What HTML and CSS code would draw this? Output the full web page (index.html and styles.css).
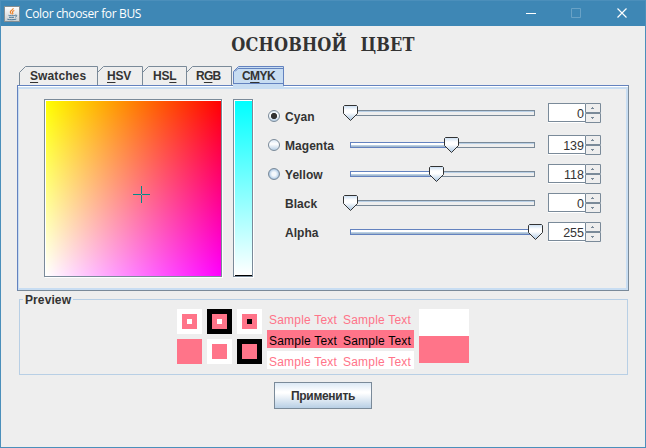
FILE: index.html
```html
<!DOCTYPE html>
<html lang="ru">
<head>
<meta charset="utf-8">
<title>Color chooser for BUS</title>
<link rel="stylesheet" href="styles.css">
</head>
<body>
<svg class="defs" width="0" height="0">
  <defs>
    <linearGradient id="knob" x1="0" y1="0" x2="0" y2="1">
      <stop offset="0" stop-color="#c8ddf2"/><stop offset=".3" stop-color="#ffffff"/><stop offset=".48" stop-color="#ffffff"/><stop offset="1" stop-color="#a9c6e2"/>
    </linearGradient>
    <symbol id="thumb" viewBox="0 0 15 16">
      <path d="M1.5.5h12l1 1v7l-7 7-7-7v-7z" fill="url(#knob)" stroke="#333"/>
    </symbol>
    <symbol id="arrows" viewBox="0 0 16 20">
      <path d="M.5.5h15v9H.5zM.5 10.5h15v9H.5z" fill="#eee" stroke="#7a8a99"/>
      <path d="M7 4h1v1h1v1H6V5h1zM6 14h3v1H8v1H7v-1H6z" fill="#7a8a99"/>
    </symbol>
  </defs>
</svg>
<div class="window">
  <header class="titlebar">
    <svg class="app-icon" width="16" height="16" viewBox="0 0 16 16">
      <defs><linearGradient id="tile" x1="0" y1="0" x2="0" y2="1"><stop stop-color="#fff"/><stop offset="1" stop-color="#c9ced0"/></linearGradient></defs>
      <rect x=".5" y=".5" width="15" height="15" fill="url(#tile)" stroke="#858e92"/>
      <path d="M9.2 2.2C9.5 4 5.8 4.5 6.3 6.2c.2.8 1 1.3 1 2.1M10.3 4.6C8 5.5 8.2 6.4 8.8 7.1c.3.5 0 .9-.4 1.3" fill="none" stroke="#ed7d20" stroke-width="1.1"/>
      <path d="M4.5 9.3c1 .6 4.7.6 6.3.1M5 11.2c1.4.5 3.7.5 5 0M3.3 13.2c2.8.7 6.2.7 9-.1M11 9.2c2.7-.6 2 1.5.2 2" fill="none" stroke="#4d7896"/>
    </svg>
    <span class="window-title">Color chooser for BUS</span>
    <svg class="controls" width="102" height="11" viewBox="0 0 102 11">
      <path d="M1 5.500h10" stroke="#fff"/>
      <path d="M46.500.5h9v9h-9z" fill="none" stroke="#69a2c6"/>
      <path d="M92.500.5l9 9M101.500.5l-9 9" stroke="#fff" stroke-width="1.15"/>
    </svg>
  </header>
  <h1><span>ОСНОВНОЙ ЦВЕТ</span></h1>
  <nav class="tabs">
    <div class="tab swatches"><svg width="79" height="19"><path d="M.5 19V6.500L6.500.5h72V19" /></svg><span><u>S</u>watches</span></div>
    <div class="tab hsv"><svg width="46" height="19"><path d="M.5 6.500L6.500.5h39V19"/></svg><span><u>H</u>SV</span></div>
    <div class="tab hsl"><svg width="45" height="19"><path d="M.5 6.500L6.500.5h38V19"/></svg><span>HS<u>L</u></span></div>
    <div class="tab rgb"><svg width="46" height="19"><path d="M.5 6.500L6.500.5h39V19"/></svg><span>R<u>G</u>B</span></div>
    <div class="tab cmyk"><svg width="53" height="21"><path class="fill" d="M1 21V6L6 1h46v20z"/><path class="selected-line" d="M1.500 18V5.500L6.500.5h45V20M3 5.500L6 2.500h45M1 17.500h51"/></svg><span>C<u>M</u>YK</span></div>
  </nav>
  <main class="panel">
    <div class="etched field-frame"><div class="field">
      <svg width="17" height="17" viewBox="0 0 17 17"><path d="M0 8.500h8M9 8.500h8M8.500 0v8M8.500 9v8" stroke="#008c89"/></svg>
    </div></div>
    <div class="etched ramp-frame"><div class="ramp"></div></div>
    <div class="channels">
      <div class="channel"><i class="radio checked"></i><b>Cyan</b></div>
      <div class="channel"><i class="radio"></i><b>Magenta</b></div>
      <div class="channel"><i class="radio hover"></i><b>Yellow</b></div>
      <div class="channel"><i></i><b>Black</b></div>
      <div class="channel"><i></i><b>Alpha</b></div>
    </div>
    <div class="values">
      <div class="value"><div class="slider"><div class="track"></div><svg class="thumb" style="left:0px"><use href="#thumb"/></svg></div><div class="spinner"><span>0</span><svg><use href="#arrows"/></svg></div></div>
      <div class="value"><div class="slider"><div class="track"><div class="filled" style="width:101px"></div></div><svg class="thumb" style="left:101px"><use href="#thumb"/></svg></div><div class="spinner"><span>139</span><svg><use href="#arrows"/></svg></div></div>
      <div class="value"><div class="slider"><div class="track"><div class="filled" style="width:86px"></div></div><svg class="thumb" style="left:86px"><use href="#thumb"/></svg></div><div class="spinner"><span>118</span><svg><use href="#arrows"/></svg></div></div>
      <div class="value"><div class="slider"><div class="track"></div><svg class="thumb" style="left:0px"><use href="#thumb"/></svg></div><div class="spinner"><span>0</span><svg><use href="#arrows"/></svg></div></div>
      <div class="value"><div class="slider"><div class="track"><div class="filled" style="width:185px"></div></div><svg class="thumb" style="left:185px"><use href="#thumb"/></svg></div><div class="spinner"><span>255</span><svg><use href="#arrows"/></svg></div></div>
    </div>
  </main>
  <section class="preview">
    <h2>Preview</h2>
    <div class="preview-body">
      <div class="squares">
        <div class="sq white"><div class="mid"><div class="core white"></div></div></div>
        <div class="sq black"><div class="mid"><div class="core white"></div></div></div>
        <div class="sq white"><div class="mid"><div class="core black"></div></div></div>
        <div class="sq pink"></div>
        <div class="sq white"><div class="mid"></div></div>
        <div class="sq black"><div class="mid"></div></div>
      </div>
      <div class="samples">
        <p><span>Sample Text</span><span>Sample Text</span></p>
        <p class="on-pink"><span>Sample Text</span><span>Sample Text</span></p>
        <p class="on-white"><span>Sample Text</span><span>Sample Text</span></p>
      </div>
      <div class="compare"><div class="white"></div><div class="pink"></div></div>
    </div>
  </section>
  <button>Применить</button>
</div>
</body>
</html>
```
FILE: styles.css
```css
* { box-sizing: border-box; }
body { margin: 0; font: 12px/14px "Liberation Sans", Arial, sans-serif; color: #333; }
svg { display: block; flex: none; }
.defs { position: absolute; }
.window { width: 646px; height: 448px; background: #eee; border: 1px solid #4b8fbb; border-top: 0; overflow: hidden; display: flex; flex-direction: column; }
.titlebar { flex: none; height: 26px; margin: 0 -1px; padding: 0 19px 0 4px; background: #3e87b5; border-top: 1px solid #4b8fbb; display: flex; align-items: center; }
.window-title { margin-left: 5px; flex: 1; color: #fff; font: 12px/18px "Open Sans", "Noto Sans", sans-serif; letter-spacing: -.35px; }
h1 { flex: none; margin: 4px 0 0; height: 31px; text-align: center; font: bold 19px/28px "DejaVu Serif", serif; letter-spacing: .2px; word-spacing: 9px; white-space: pre; }
h1 span { display: inline-block; transform: scaleX(.85); }

.tabs { flex: none; display: flex; height: 19px; margin: 5px 0 0 18px; font-weight: bold; position: relative; z-index: 1; }
.tab { display: grid; height: 19px; }
.tab > * { grid-area: 1 / 1; }
.tab path { fill: none; stroke: #7a8a99; }
.tab .fill { fill: #c8ddf2; stroke: none; }
.tab .selected-line { stroke: #6382bf; }
.tab span { line-height: 14px; padding-top: 3px; white-space: nowrap; }
.tab u { text-underline-offset: 2px; text-decoration-thickness: 1px; }
.swatches { width: 78px; }
.swatches span { padding-left: 11px; letter-spacing: .1px; }
.hsv { width: 45px; }
.hsv span { padding-left: 10px; letter-spacing: -.2px; }
.hsl { width: 44px; }
.hsl span { padding-left: 11px; letter-spacing: -.2px; }
.rgb { width: 46px; }
.rgb span { padding-left: 10px; letter-spacing: -.8px; }
.cmyk span { padding-left: 10px; letter-spacing: -.6px; }

.panel { flex: none; width: 612px; height: 206px; margin-left: 16px; padding: 13px 0 0 26px; display: flex; align-items: flex-start; border: 1px solid #6382bf; border-right-color: #7a8a99; border-bottom-color: #7a8a99; box-shadow: inset 0 1px #fff, inset 1px 0 #c8ddf2, inset 0 3px #c8ddf2, inset -2px -2px #c8ddf2; }
.etched { border: 1px solid #7a8a99; box-shadow: inset 1px 1px #fff, 1px 1px #fff; padding: 1px 0 0 1px; }
.field-frame { width: 178px; height: 178px; }
.field { width: 175px; height: 175px; padding: 85px 0 0 87px; background: linear-gradient(to right, #fff, #f0f), linear-gradient(to bottom, #ff0, #fff); background-blend-mode: multiply; }
.ramp-frame { width: 20px; height: 178px; margin-left: 11px; }
.ramp { width: 17px; height: 175px; background: linear-gradient(#0ff, #fff); border-bottom: 1px solid #000; }
.channels { margin: 11px 0 0 15px; width: 75px; }
.channel { display: flex; align-items: center; height: 12px; margin-bottom: 17px; }
.channel i { width: 12px; height: 12px; margin-right: 5px; }
.channel b { line-height: 14px; letter-spacing: .05px; position: relative; top: 1px; }
.radio { border: 1px solid #7a8a99; border-radius: 50%; background: linear-gradient(#dce9f5, #fff 40%, #b8cfe5); }
.radio.checked { background: radial-gradient(circle, #333 0 2.8px, transparent 3.3px), linear-gradient(#dce9f5, #fff 40%, #b8cfe5); }
.radio.hover { background: radial-gradient(circle, #f4f8fc 0 2px, #c8dbed 4px, #a3c0dd 5px); }
.values { margin-top: 4px; display: flex; flex-direction: column; gap: 9px; }
.value { display: flex; height: 20px; }
.value:first-child { margin-bottom: 3px; }
.slider { width: 200px; height: 20px; padding: 7px 0 0 7px; position: relative; }
.track { width: 185px; height: 6px; border: 1px solid #7a8a99; box-shadow: inset 0 1px #b8cfe5; }
.filled { height: 6px; margin: -1px; border: 1px solid #6382bf; background: linear-gradient(#fff 0 2px, #b8cfe5 2px 3px, #a3b8cc 3px); }
.thumb { position: absolute; top: 2px; width: 15px; height: 16px; }
.spinner { display: flex; width: 53px; height: 20px; margin-left: 5px; background: #fff; }
.spinner span { width: 37px; height: 19px; border: 1px solid #7a8a99; border-right: 0; text-align: right; padding-right: 1px; font-size: 12.5px; line-height: 19px; padding-top: 1px; }
.spinner svg { width: 16px; height: 20px; }

.preview { flex: none; width: 609px; height: 76px; margin: 8px 0 0 18px; border: 1px solid #b8cfe5; }
h2 { width: 50px; height: 14px; margin: -7px 0 0 3px; padding-left: 2px; font: bold 12px/14px "Liberation Sans", Arial, sans-serif; letter-spacing: .1px; background: #eee; }
.preview-body { display: flex; margin: 2px 0 0 157px; }
.squares { display: grid; grid-template-columns: repeat(3, 25px); grid-auto-rows: 25px; gap: 5px; }
.sq { padding: 5px; }
.mid { width: 15px; height: 15px; padding: 5px; background: #ff7489; }
.core { height: 5px; }
.white { background: #fff; }
.black { background: #000; }
.pink { background: #ff7489; }
.samples { width: 147px; margin-left: 5px; color: #ff7489; }
.samples p { display: flex; height: 18px; margin: 0 0 3px; padding: 2px 0 0 2px; gap: 6px; white-space: nowrap; line-height: 18px; }
.samples span { width: 68px; letter-spacing: .2px; }
.samples .on-pink { background: #ff7489; color: #000; }
.samples .on-white { background: #fff; }
.compare { width: 50px; height: 54px; margin-left: 5px; display: grid; grid-template-rows: 27px 27px; }
button { flex: none; width: 98px; height: 27px; margin: 7px 0 0 273px; padding: 0; border: 1px solid #7a8a99; background: linear-gradient(#dce9f5, #fff 35%, #fff 40%, #b8cfe5); color: #333; font: bold 12px/14px "Liberation Sans", Arial, sans-serif; letter-spacing: -.3px; }
```
